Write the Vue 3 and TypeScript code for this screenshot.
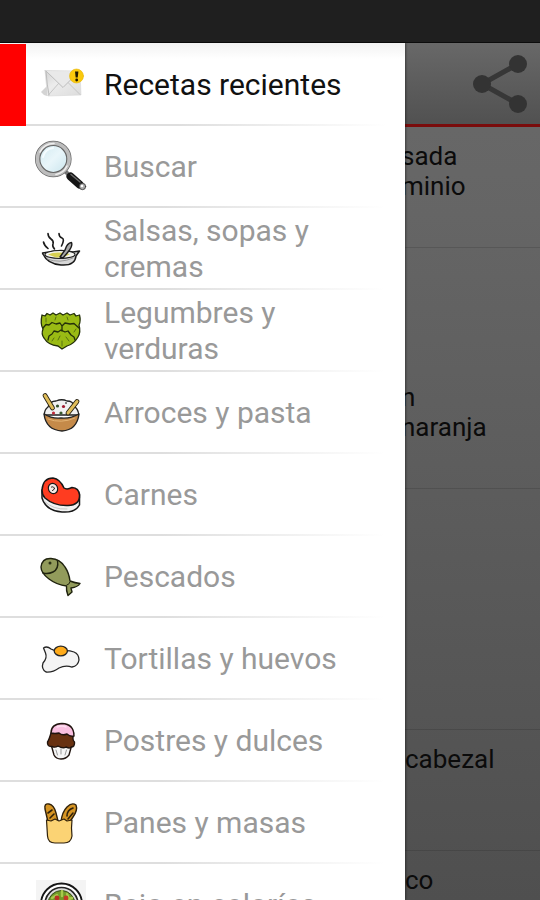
<script setup lang="ts">
import { ref } from 'vue'

interface Category {
  id: string
  label: string
}

interface Recipe {
  lines: string[]
  whole?: boolean
  divided?: boolean
}

const categories: Category[] = [
  { id: 'recientes', label: 'Recetas recientes' },
  { id: 'buscar', label: 'Buscar' },
  { id: 'salsas', label: 'Salsas, sopas y cremas' },
  { id: 'legumbres', label: 'Legumbres y verduras' },
  { id: 'arroces', label: 'Arroces y pasta' },
  { id: 'carnes', label: 'Carnes' },
  { id: 'pescados', label: 'Pescados' },
  { id: 'tortillas', label: 'Tortillas y huevos' },
  { id: 'postres', label: 'Postres y dulces' },
  { id: 'panes', label: 'Panes y masas' },
  { id: 'calorias', label: 'Bajo en calorías' },
]

const recipes: Recipe[] = [
  { lines: ['sada', 'minio'], divided: true },
  { lines: [] },
  { lines: ['n', 'naranja'], divided: true },
  { lines: [] },
  { lines: [], divided: true },
  { lines: ['cabezal'], whole: true, divided: true },
  { lines: ['co'], whole: true },
]

const selected = ref('recientes')
</script>

<template>
  <div class="screen">
    <div class="status-bar"></div>
    <div class="stage">
      <main class="page">
        <header class="action-bar">
          <button type="button" class="share" aria-label="Compartir">
            <svg viewBox="0 0 56 60" width="56" height="60">
              <path d="M46 10 10 30 46 50" fill="none" stroke="#373737" stroke-width="5" />
              <circle cx="46" cy="10" r="9" fill="#333" />
              <circle cx="10" cy="30" r="9" fill="#333" />
              <circle cx="46" cy="50" r="9" fill="#333" />
            </svg>
          </button>
        </header>
        <ul class="recipes">
          <li
            v-for="(recipe, i) in recipes"
            :key="i"
            class="recipe"
            :class="{ whole: recipe.whole, divided: recipe.divided }"
          >
            <span v-for="line in recipe.lines" :key="line" class="recipe-line">{{ line }}</span>
          </li>
        </ul>
      </main>

      <nav class="drawer">
        <a
          v-for="item in categories"
          :key="item.id"
          :href="'#' + item.id"
          class="item"
          :class="{ active: item.id === selected }"
          @click="selected = item.id"
        >
          <svg class="icon" viewBox="0 0 50 50" width="50" height="50" stroke-linecap="round" stroke-linejoin="round">
            <g v-if="item.id === 'recientes'">
              <defs>
                <linearGradient id="paper" x1="0" y1="0" x2="1" y2="1">
                  <stop offset="0" stop-color="#d2d2d2" />
                  <stop offset="0.4" stop-color="#ececec" />
                  <stop offset="1" stop-color="#dcdcdc" />
                </linearGradient>
              </defs>
              <path d="M5 32 11 26V36L8 35Z" fill="#d4d4d4" />
              <path d="M9 10.500 44 11 45 35 12 36Q10 24 9 10.500Z" fill="url(#paper)" stroke="#d6d6d6" stroke-width=".6" />
              <path d="M12 35.500 23 23M44 34.500 32 22.500" fill="none" stroke="#c6c6c6" />
              <path d="M10 11 27 27.500 43 11.500" fill="#e9e9e9" stroke="#bdbdbd" />
              <path d="M10 11.500Q11 25 13 35" fill="none" stroke="#bcbcbc" />
              <circle cx="40.500" cy="16" r="7" fill="#fac90d" stroke="#e8b70c" stroke-width=".6" />
              <path d="M39 11.500h3.400l-.7 6h-2z" fill="#1d1700" />
              <circle cx="40.700" cy="20" r="1.400" fill="#1d1700" />
            </g>

            <g v-else-if="item.id === 'buscar'">
              <defs>
                <linearGradient id="glass" x1="0" y1="0" x2="1" y2="1">
                  <stop offset="0" stop-color="#cfe8ef" />
                  <stop offset="0.5" stop-color="#e9f6fa" />
                  <stop offset="1" stop-color="#c6e3ec" />
                </linearGradient>
              </defs>
              <path d="M29 29 33 33" stroke="#777" stroke-width="4" />
              <path d="M34.500 34.500 43.500 42.500" stroke="#151515" stroke-width="8" />
              <path d="M35 32.500 44 40" stroke="#6c6c6c" stroke-width="1.400" />
              <circle cx="46.500" cy="44.500" r="3.200" fill="#aaa" stroke="#333" stroke-width=".8" />
              <circle cx="46" cy="44" r="1.300" fill="#fff" />
              <circle cx="17.300" cy="17" r="15.600" fill="url(#glass)" stroke="#666" stroke-width="5.400" />
              <circle cx="17.300" cy="17" r="15.800" fill="none" stroke="#bdbdbd" stroke-width="3.600" />
              <path d="M4 10A15.600 15.600 0 0 1 18 1.500M31 24A15.600 15.600 0 0 1 20 32.500" fill="none" stroke="#efefef" stroke-width="1.600" />
              <path d="M7 15Q9 7 17 6" fill="none" stroke="#f5fcff" stroke-width="2" />
            </g>

            <g v-else-if="item.id === 'salsas'" stroke="#1b1b1b">
              <path d="M7.500 18Q8 21 12 24.500M12 9.500Q12 13 15 15T17 20Q16 22 18.500 25M23 9.500Q23 13 26 14T25.500 22" fill="none" stroke-width="1.600" />
              <path d="M6.500 29Q11 40 25 41T40 32L43.500 27 37 28Q25 25 13 28Z" fill="#d7d7d7" stroke-width="1.500" />
              <ellipse cx="24" cy="30.500" rx="15" ry="4" fill="#f4f4f0" stroke-width="1.100" />
              <path d="M12 30.500Q19 27 34 30 28 34 20 33.500Z" fill="#d7d052" stroke="none" />
              <path d="M24 33 29 26Q31 19 35.500 18.500 37 22 32 28L27 34Z" fill="#a8a8a8" stroke-width="1.400" />
              <path d="M11 35Q24 40 37 34" fill="none" stroke="#8b8b8b" stroke-width=".8" />
            </g>

            <g v-else-if="item.id === 'legumbres'" fill="#9abb14" stroke="#24300a" stroke-width="1.300">
              <path d="M6 9 9 10 11 7.500 14 9 17 7 20 9 24 7 27 9 31 7 34 9 38 7.500 40 10 43.500 9Q45 15 43 19 45 26 42 31 38 38 31 40L26 43 22 40Q12 39 8 32 5 28 7 23 4 18 6 9Z" />
              <path d="M7 22 10 18.500 13 19 16 16.500 20 18 24 17 26 20 29 17 34 18 38 17.500 43 22M26 20V25" fill="none" />
              <path d="M12 34 13 30 16 28 18 25 22 26 25 24 29 26 32 25 35 29 38 31 39 34" fill="none" />
              <path d="M16 35 18 32M22 34 24 30M30 31 33 35M26 35V40M10 12V16M20 11 19 14M31 11 32 14M40 23 38 26" fill="none" stroke="#587211" stroke-width="1" />
            </g>

            <g v-else-if="item.id === 'arroces'" stroke="#222">
              <path d="M8.500 27Q8 22 12 19 14 13 20 13 26 10.500 31 13 37 13 38 18 43 22 42.500 27Z" fill="#f1f1f1" stroke-width="1.300" />
              <path d="M8 26Q10 42 26 43 41 42 43 26 34 31 25 30 16 31 8 26Z" fill="#c58a49" stroke-width="1.400" />
              <path d="M12 31Q25 36 39 30" fill="none" stroke="#e3b374" stroke-width="1" />
              <path d="M9 7.500 16.500 20M41 13.500 32 25" stroke-width="4.800" stroke="#292313" />
              <path d="M9 7.500 16.500 20M41 13.500 32 25" stroke-width="3" stroke="#e0bd5a" />
              <g stroke="none">
                <circle cx="21.500" cy="18" r="1.600" fill="#31502b" />
                <circle cx="27.500" cy="18.500" r="1.600" fill="#9f172d" />
                <circle cx="17.500" cy="25" r="1.600" fill="#c02b3c" />
                <circle cx="25" cy="25" r="1.600" fill="#37582c" />
                <circle cx="30" cy="15" r="1" fill="#555" />
              </g>
            </g>

            <g v-else-if="item.id === 'carnes'" stroke="#171717" stroke-width="1.500">
              <path d="M6 20V28Q10 41 26 42 39 43 43.500 35V24L25 22Z" fill="#f2f2f2" />
              <path d="M6 20Q7 8 17 8 24 9 28 18 31 20 36 17.500 43 18 43.500 25 44 35 32 35.500 18 36 9 28 6 25 6 20Z" fill="#ff3c20" />
              <ellipse cx="17" cy="18.500" rx="4.600" ry="5.200" fill="#f5e9e5" stroke-width="1.200" transform="rotate(-25 17 18.500)" />
              <path d="M15.500 17Q18 16 18.500 19L16.500 20.500" fill="none" stroke-width="1" />
              <path d="M8 31Q17 40 31 39" fill="none" stroke="#bbb" stroke-width=".8" />
            </g>

            <g v-else-if="item.id === 'pescados'" fill="#929b5b" stroke="#20230f" stroke-width="1.400">
              <path d="M5 15Q6 6 15 6.500 24 7 29 15 33 21 34 29 39 31 44 31.500 42 35 35 36L36 40 32 43.500Q30 38 30.500 34 21 33 13 27 5 21 5 15Z" />
              <path d="M21.500 8.500Q23 17 17 20 12 22.500 7 21" fill="none" />
              <circle cx="14" cy="11" r="1.500" fill="#2b3014" stroke="none" />
              <path d="M31 33Q33 33 34 30" fill="none" stroke-width="1" />
            </g>

            <g v-else-if="item.id === 'tortillas'" stroke="#262626" stroke-width="1.300">
              <path d="M7.500 14Q11 11.500 15 15 20 18 26 17 32 16 38 18 43 20 43 26 42 32 36 33 29 31 23 34 17 38.500 10 38 5 35 7 29 11.500 24 9.500 19Z" fill="#f4f4f4" />
              <ellipse cx="24.800" cy="17" rx="6.600" ry="4.800" fill="#ffab1a" />
            </g>

            <g v-else-if="item.id === 'postres'" stroke="#20140f" stroke-width="1.400">
              <path d="M15.500 30 18 39Q20 43 25 43T33 39L35.500 30Z" fill="#f6f6f6" />
              <path d="M20 34 21.500 39M25 33V38M30.500 34 29 39" stroke="#999" stroke-width="1" />
              <path d="M15 17Q13 24 11.500 26 11 31 16 30.500 19 32 22 30 27 33 30 31 34 33 35 31 39 31 38.500 26 36 24 37.500 17Z" fill="#683111" />
              <path d="M15 17Q15 8 26 7.500 38 8 38 20 34 21 31 18 26 20 23 17 19 18 15 17Z" fill="#f9bfe0" />
              <path d="M21 11Q26 9 30 11" fill="none" stroke="#fde0f1" />
            </g>

            <g v-else-if="item.id === 'panes'" stroke="#30210b" stroke-width="1.400">
              <path d="M12 24 9 11Q8 5 13 6 18 7 20 15L22 23Z" fill="#d69524" />
              <path d="M25 24Q26 14 31 9 36 4 40 7 42 12 37 19L33 25Z" fill="#d69524" />
              <path d="M12 15 16 12M14 20 18 16M31 18Q31 12 37 10M32 21 37 15" fill="none" stroke-width="1.600" />
              <path d="M10.500 22 15 23 19 21 23 23 28 21 31 23 36 22Q35 30 36 38 35 45 28 45H19Q12 45 11.500 38Z" fill="#fbd374" stroke-width="1.200" />
            </g>

            <g v-else>
              <rect width="50" height="50" fill="#f4f4f4" />
              <circle cx="25.500" cy="24" r="20.500" fill="#fff" stroke="#151515" stroke-width="1.800" />
              <circle cx="25.500" cy="24" r="16.500" fill="#ddd" stroke="#222" stroke-width="1.600" />
              <circle cx="25.500" cy="24" r="13.500" fill="#719b27" stroke="#35481a" stroke-width="1" />
              <path d="M16 18 21 15 22 20M31 14 33 19 36 18M26 11V16" fill="none" stroke="#a9c94d" stroke-width="2.400" />
              <circle cx="21" cy="18" r="2.400" fill="#b93222" />
              <circle cx="30" cy="18" r="2.400" fill="#c33c25" />
              <circle cx="26" cy="23" r="3" fill="#9e2a1e" />
            </g>
          </svg>
          <span class="label">{{ item.label }}</span>
        </a>
      </nav>
    </div>
  </div>
</template>

<style>
body {
  margin: 0;
  background: #505050;
}
</style>

<style scoped>
.screen {
  display: flex;
  flex-direction: column;
  height: 100vh;
  overflow: hidden;
  font-family: Roboto, "Noto Sans", sans-serif;
}

.status-bar {
  flex: none;
  height: 42px;
  background: #1f1f1f;
  border-bottom: 1px solid #0c0c0c;
}

.stage {
  display: grid;
  flex: 1;
  min-height: 0;
  grid-template-columns: 3fr 1fr;
  grid-template-rows: 100%;
}

.page {
  grid-area: 1 / 1 / 2 / 3;
  overflow: hidden;
  background: linear-gradient(#696969, #656565 20%, #4f4f4f);
}

.action-bar {
  display: flex;
  align-items: center;
  justify-content: flex-end;
  height: 84px;
  padding-right: 12px;
  background: linear-gradient(#686868, #515151);
  border-bottom: 3px solid #7a0c0c;
  box-sizing: border-box;
}

.share {
  display: flex;
  padding: 0;
  border: 0;
  background: none;
}

.recipes {
  margin: 0;
  padding: 0;
  list-style: none;
}

.recipe {
  display: flex;
  flex-direction: column;
  height: 120px;
  padding: 14px 0 0 calc(75% - 4px);
  box-sizing: border-box;
  color: #0b0b0b;
  font-size: 26px;
  line-height: 30px;
}

.recipe.whole {
  padding-left: 75%;
}

.recipe.divided {
  height: 121px;
  border-bottom: 1px solid rgba(0, 0, 0, 0.12);
}

.drawer {
  grid-area: 1 / 1 / 2 / 2;
  z-index: 1;
  overflow: hidden;
  padding-top: 1px;
  background: linear-gradient(#f2f2f2, #fff 16px);
  box-shadow: 1px 0 2px rgba(0, 0, 0, 0.4);
}

.item {
  display: flex;
  align-items: center;
  gap: 18px;
  height: 82px;
  padding: 0 18px 0 36px;
  box-sizing: border-box;
  color: #999;
  font-size: 30px;
  line-height: 36px;
  text-decoration: none;
  background: linear-gradient(90deg, #dedede 40%, transparent 95%) bottom / 100% 2px no-repeat;
}

.item.active {
  padding-left: 10px;
  border-left: 26px solid #f00;
  color: #111;
}

.icon {
  flex: none;
  overflow: visible;
}
</style>
